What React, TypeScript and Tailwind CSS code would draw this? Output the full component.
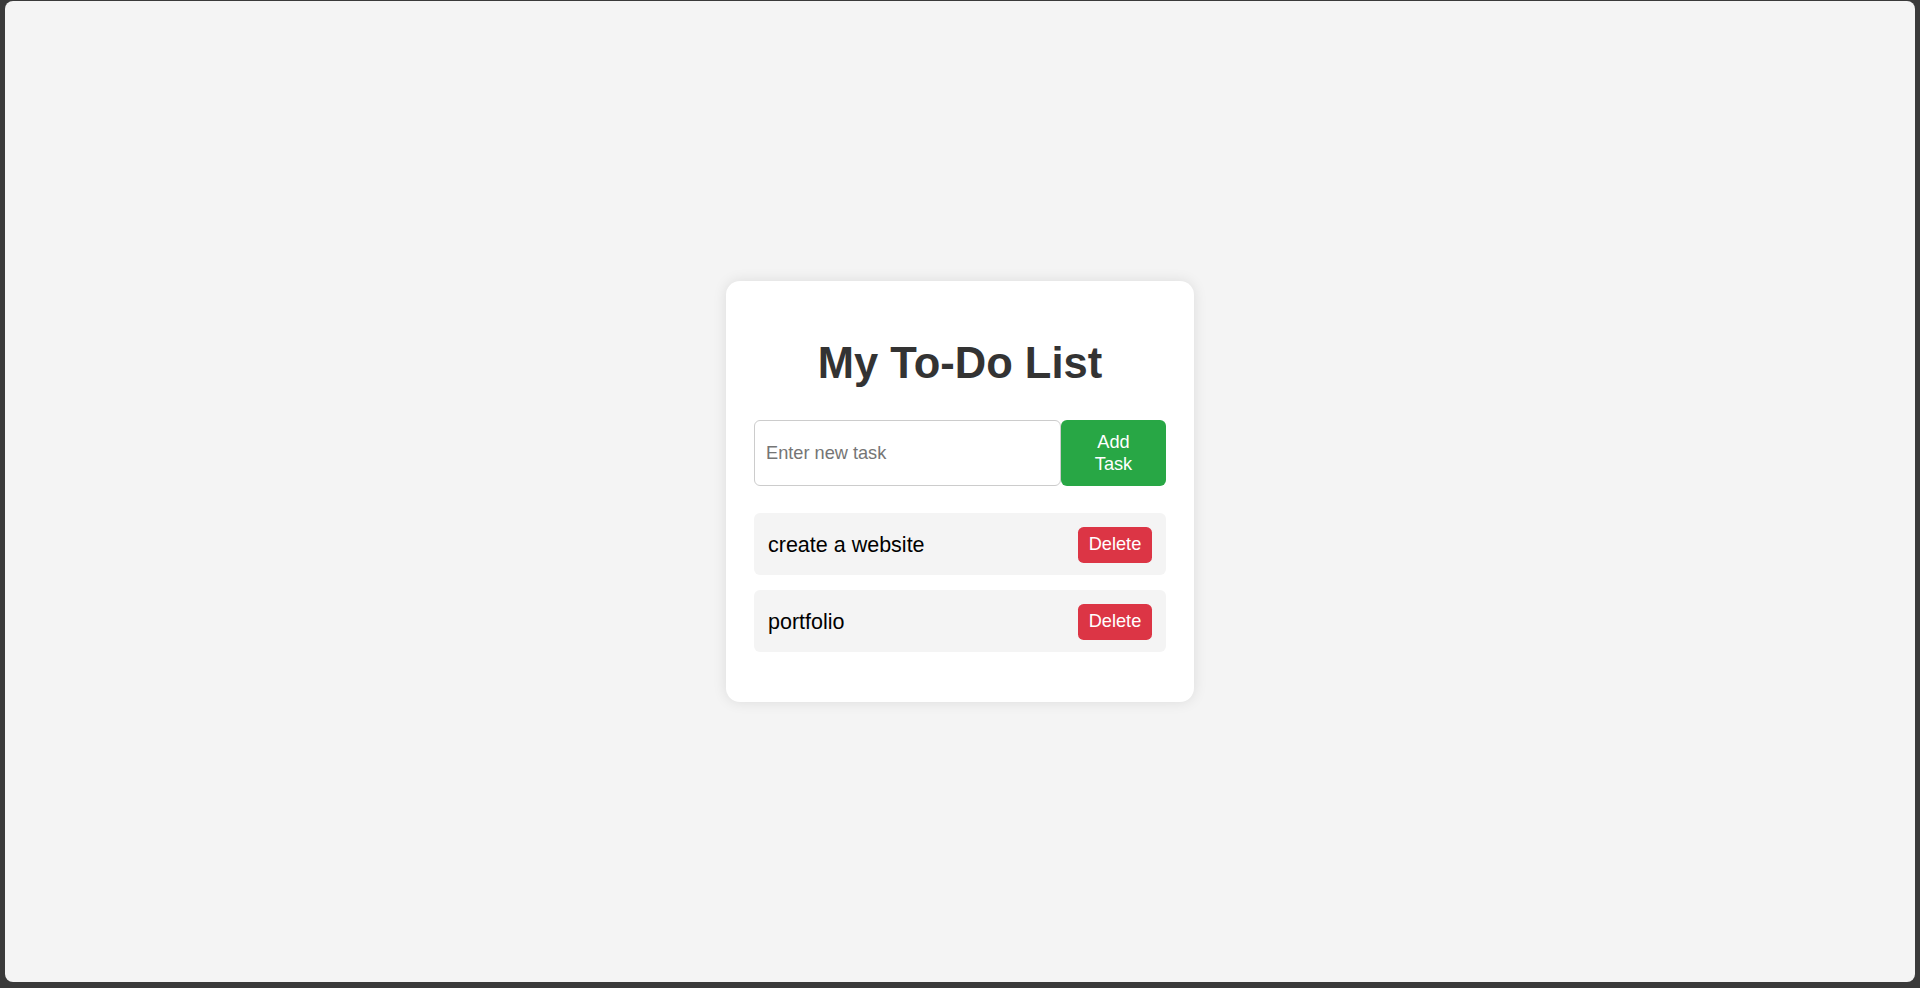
const tasks = ["create a website", "portfolio"]

export default function App() {
    return (
        <div className="h-screen w-full bg-[#3a3a3a] pt-px pl-[5px] pr-[5px] pb-[6px] font-['Liberation_Sans',Arial,sans-serif]">
            <div className="h-full w-full rounded-[8px] bg-[#f4f4f4] flex items-center justify-center">
                <div className="w-[468px] bg-white rounded-[14px] shadow-[0_0_14px_rgba(0,0,0,0.1)] px-[28px] pt-[57px] pb-[50px]">
                    <h1 className="text-center text-[43.5px] font-bold text-[#333] leading-[51.5px]">My To-Do List</h1>
                    <div className="flex mt-[30px]">
                        <input
                            type="text"
                            placeholder="Enter new task"
                            className="w-[307px] h-[66px] border border-[#ccc] rounded-[6px] px-[11px] pt-[2px] text-[18.2px] placeholder:text-[#757575] outline-none"
                        />
                        <button className="w-[105px] h-[66px] bg-[#28a745] text-white text-[18.2px] leading-[22px] rounded-[6px] px-[21px]">
                            Add Task
                        </button>
                    </div>
                    <ul className="mt-[27px] flex flex-col gap-[15px]">
                        {tasks.map((t) => (
                            <li key={t} className="h-[62px] bg-[#f4f4f4] rounded-[6px] pl-[14px] pr-[14px] flex items-center justify-between">
                                <span className="text-[21.5px] text-black mt-[2px]">{t}</span>
                                <button className="w-[74px] h-[36px] mt-[2px] bg-[#dc3545] text-white text-[18.2px] rounded-[5.6px]">Delete</button>
                            </li>
                        ))}
                    </ul>
                </div>
            </div>
        </div>
    )
}
